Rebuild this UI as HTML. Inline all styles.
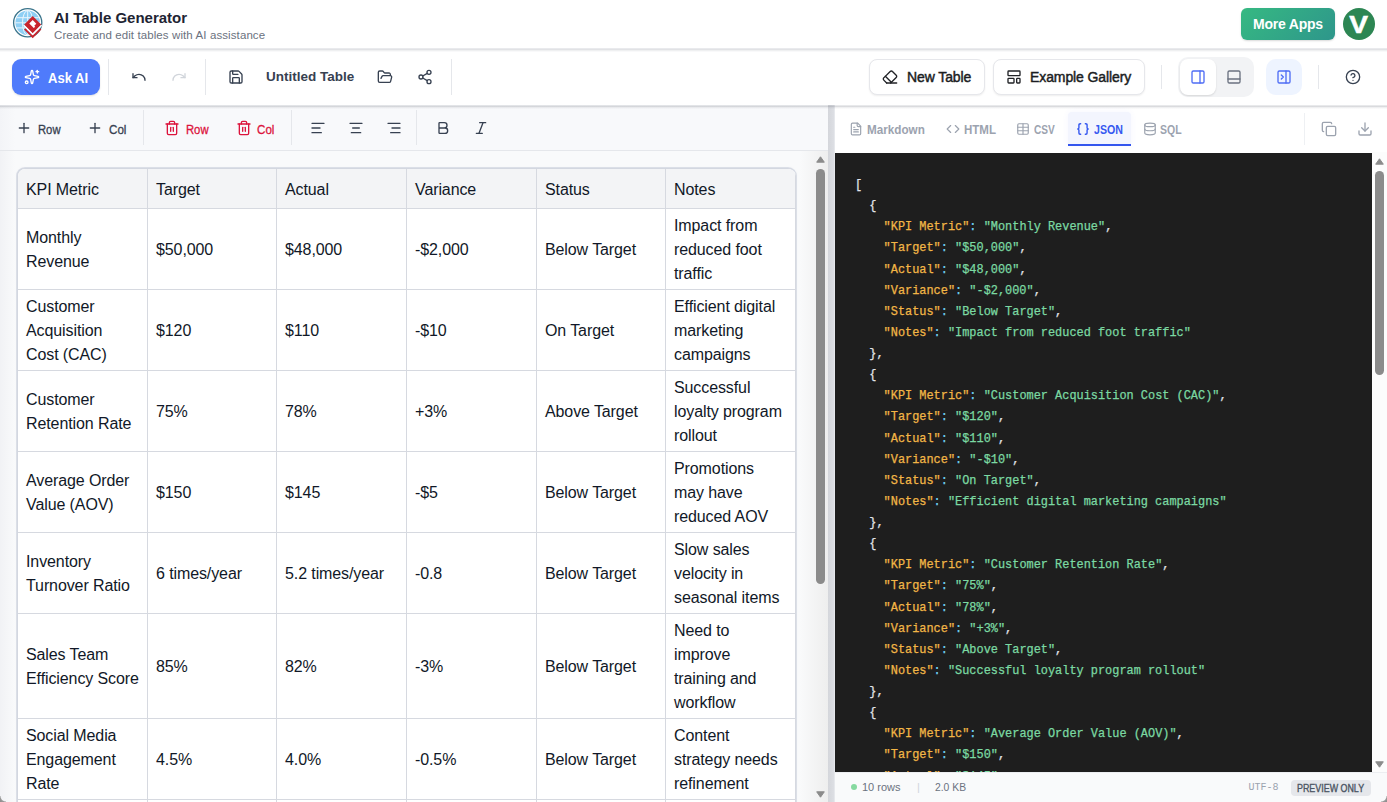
<!DOCTYPE html>
<html lang="en">
<head>
<meta charset="utf-8">
<title>AI Table Generator</title>
<style>
*{box-sizing:border-box;margin:0;padding:0}
html,body{width:1387px;height:802px;overflow:hidden;background:#fff}
body{font-family:"Liberation Sans",sans-serif;color:#1f2937;position:relative}
.abs{position:absolute}
svg.ic{position:absolute;fill:none;stroke:currentColor;stroke-width:2;stroke-linecap:round;stroke-linejoin:round}
/* header */
#hdr{left:0;top:0;width:1387px;height:48px;background:#fff;z-index:5}
#ttl{left:54px;top:9px;font-size:15px;font-weight:bold;color:#1e2433;line-height:18px;white-space:nowrap}
#sub{left:54px;top:28px;font-size:11.5px;letter-spacing:.1px;color:#6b7280;line-height:14px;white-space:nowrap}
#more{left:1241px;top:8px;width:94px;height:32px;border-radius:6px;background:linear-gradient(135deg,#36b982,#2e968b);color:#fff;font-weight:bold;font-size:14px;letter-spacing:-.22px;line-height:32px;text-align:center;box-shadow:0 1px 2px rgba(0,0,0,.15)}
#ava{left:1343px;top:8px;width:32px;height:32px;border-radius:50%;background:#2d8653;color:#fff;font-weight:bold;font-size:23px;line-height:32px;text-align:center}
/* toolbar */
#tb{left:0;top:48px;width:1387px;height:57px;background:#fff;z-index:4}
.vd{position:absolute;width:1px;background:#e5e7eb}
#ask{left:12px;top:11px;width:88px;height:36px;border-radius:9px;background:#4f7bfb;color:#fff;box-shadow:0 1px 2px rgba(0,0,0,.12)}
#ask span{position:absolute;left:35.500px;top:.5px;line-height:36px;font-size:14px;transform:scaleX(.93);transform-origin:0 50%;font-weight:bold;white-space:nowrap}
.tbi{color:#374151}
#utl{left:266px;top:20px;font-size:13.5px;font-weight:bold;color:#374151;line-height:18px;white-space:nowrap}
.btn{position:absolute;height:36px;top:11px;border:1px solid #e6e7eb;border-radius:8px;background:#fff;box-shadow:0 1px 2px rgba(0,0,0,.07);color:#202226}
.btn span{position:absolute;top:0;line-height:34px;font-size:14px;letter-spacing:-.1px;-webkit-text-stroke:.45px;white-space:nowrap;color:#1b1d22}
#seg{left:1178px;top:9px;width:76px;height:40px;border-radius:10px;background:#f2f3f5}
#segl{left:1180px;top:11px;width:36px;height:36px;border-radius:8px;background:#fff;box-shadow:0 1px 2px rgba(0,0,0,.12);color:#4f6df5}
#prc{left:1266px;top:11px;width:36px;height:36px;border-radius:10px;background:#eef4ff;color:#4f6df5}

/* left pane */
#lp{left:0;top:105px;width:828px;height:697px;background:linear-gradient(90deg,#f1f2f5 0,#f9fafb 15px)}
#st{left:0;top:0;width:828px;height:46px;background:linear-gradient(90deg,#f3f4f7 0,#f8f9fb 15px);border-bottom:1px solid #e5e7eb}
#st .t{position:absolute;top:17px;font-size:12.5px;transform-origin:0 50%;line-height:16px;color:#374151;white-space:nowrap;-webkit-text-stroke:.3px}
#st .r{color:#dc143c}
#sb1{left:800px;top:46px;width:28px;height:651px;background:linear-gradient(90deg,#f9fafb,#eeeeee)}
#sb1 i{position:absolute;left:16px;top:18px;width:9px;height:415px;border-radius:4.5px;background:#8b8b8b}
.arr{position:absolute;width:0;height:0;border-left:5px solid transparent;border-right:5px solid transparent}
#tw{left:17px;top:63px;width:779px;height:700px;border-left:1px solid #d3d7e0;border-top:1px solid #d3d7e0;border-radius:8px 8px 0 0;overflow:hidden;background:#fff;box-shadow:0 0 0 1px rgba(185,192,210,.4),0 0 2px rgba(150,160,185,.25)}
table{border-collapse:separate;border-spacing:0;table-layout:fixed;width:778px;font-size:16px;line-height:24px;color:#111827}
td,th{border-right:1px solid #d6d9e0;border-bottom:1px solid #d6d9e0;padding:5px 8px 3px;text-align:left;vertical-align:middle;font-weight:normal;letter-spacing:-0.1px;white-space:nowrap}
th{background:#f3f4f6;height:40px;padding:2px 8px 0}
/* splitter */
#sp{left:828px;top:105px;width:7px;height:697px;background:linear-gradient(90deg,#d4d6db 0,#dcdee3 80%,#eceef1 100%)}
/* right pane */
#rp{left:835px;top:105px;width:552px;height:697px;background:#fff}
.tab{position:absolute;top:17px;font-size:12.5px;font-weight:bold;line-height:16px;color:#9ca3af;white-space:nowrap;transform-origin:0 50%}
#jt{left:233px;top:7px;width:63px;height:34px;background:#f3f5fe;border-bottom:2px solid #3355ee;border-radius:4px 4px 0 0;box-shadow:0 0 6px rgba(80,110,255,.06)}
#code{left:0;top:48px;width:537px;height:619px;background:#1e1e1e;overflow:hidden}
#code pre{position:absolute;left:20px;top:22px;-webkit-text-stroke:.25px;font-family:"Liberation Mono",monospace;font-size:11.92px;line-height:21.125px;color:#e2e4e8;white-space:pre}
#code .k{color:#f2b646}
#code .c{color:#6fd0f2}
#code .s{color:#7bd9a2}
#sb2{left:537px;top:47px;width:15px;height:620px;background:#fcfcfc}
#sb2 i{position:absolute;left:3px;top:19px;width:9px;height:204px;border-radius:4.5px;background:#8b8b8b}
#stat{left:0;top:667px;width:552px;height:30px;background:#f9fafb;box-shadow:inset 0 1px 0 #eceef1;font-size:11px;color:#6b7280}
#stat div{position:absolute;white-space:nowrap;line-height:14px}
.shd{position:absolute;left:0;width:1387px;height:4px;z-index:6;pointer-events:none}
</style>
</head>
<body>
<!-- HEADER -->
<div id="hdr" class="abs">
  <svg class="abs" style="left:8px;top:4px" width="40" height="40" viewBox="0 0 40 40">
    <circle cx="19.700" cy="18.800" r="14.100" fill="#fff" stroke="#3a748b" stroke-width="1.300"/>
    <circle cx="19.700" cy="18.800" r="12.300" fill="#8ecff4"/>
    <g fill="none" stroke="#eaf6fd" stroke-width="1">
      <ellipse cx="19.700" cy="18.800" rx="5.200" ry="12.300"/>
      <path d="M19.700 6.500v24.600M8.500 13.700h22.400M7.400 18.800h24.600M8.500 23.900h22.400"/>
    </g>
    <path d="M24.700 12 33.400 20.700 24.700 29.400 16 20.700z" fill="#c8252d"/>
    <path d="M15.700 21.300 24.700 30.300 33.700 21.300" fill="none" stroke="#fff" stroke-width="1.500" stroke-miterlimit="10"/>
    <path d="M16.700 24.900 24.700 32.900 32.700 24.900" fill="none" stroke="#c8252d" stroke-width="1.900" stroke-miterlimit="10"/>
    <path d="M21.25 19.58 24.74 16.09 28.30 19.65 26.26 21.70 27.21 22.67 25.77 24.10z" fill="#fff"/>
  </svg>
  <div id="ttl" class="abs">AI Table Generator</div>
  <div id="sub" class="abs">Create and edit tables with AI assistance</div>
  <div id="more" class="abs">More Apps</div>
  <div id="ava" class="abs"><span style="display:inline-block;transform:scaleX(1.22);position:relative;top:.5px;-webkit-text-stroke:.5px #fff">V</span></div>
</div>
<div class="shd" style="top:48px;background:linear-gradient(180deg,#e9eaed 0 25%,#e1e2e5 25% 50%,#eff0f1 50% 75%,#f9f9fa 75% 100%)"></div>
<div class="shd" style="top:105px;background:linear-gradient(180deg,rgba(120,124,135,.17) 0 25%,rgba(100,104,115,.24) 25% 50%,rgba(110,114,125,.11) 50% 75%,rgba(110,114,125,.04) 75% 100%)"></div>
<!-- TOOLBAR -->
<div id="tb" class="abs">
  <div id="ask" class="abs">
    <svg class="ic" style="left:12px;top:10px" width="16" height="16" viewBox="0 0 24 24"><path d="M11.017 2.814a1 1 0 0 1 1.966 0l1.051 5.558a2 2 0 0 0 1.594 1.594l5.558 1.051a1 1 0 0 1 0 1.966l-5.558 1.051a2 2 0 0 0-1.594 1.594l-1.051 5.558a1 1 0 0 1-1.966 0l-1.051-5.558a2 2 0 0 0-1.594-1.594l-5.558-1.051a1 1 0 0 1 0-1.966l5.558-1.051a2 2 0 0 0 1.594-1.594z"/><path d="M20 2v4"/><path d="M22 4h-4"/><circle cx="4" cy="20" r="2"/></svg>
    <span>Ask AI</span>
  </div>
  <div class="vd" style="left:108px;top:11px;height:36px"></div>
  <svg class="ic tbi" style="left:131px;top:21px" width="16" height="16" viewBox="0 0 24 24"><path d="M3 7v6h6"/><path d="M21 17a9 9 0 0 0-9-9 9 9 0 0 0-6 2.3L3 13"/></svg>
  <svg class="ic" style="left:171px;top:21px;color:#d1d5db" width="16" height="16" viewBox="0 0 24 24"><path d="M21 7v6h-6"/><path d="M3 17a9 9 0 0 1 9-9 9 9 0 0 1 6 2.3l3 2.700"/></svg>
  <div class="vd" style="left:205px;top:11px;height:36px"></div>
  <svg class="ic tbi" style="left:228px;top:21px" width="16" height="16" viewBox="0 0 24 24"><path d="M15.2 3a2 2 0 0 1 1.4.6l3.8 3.8a2 2 0 0 1 .6 1.4V19a2 2 0 0 1-2 2H5a2 2 0 0 1-2-2V5a2 2 0 0 1 2-2z"/><path d="M17 21v-7a1 1 0 0 0-1-1H8a1 1 0 0 0-1 1v7"/><path d="M7 3v4a1 1 0 0 0 1 1h7"/></svg>
  <div id="utl" class="abs">Untitled Table</div>
  <svg class="ic tbi" style="left:377px;top:21px" width="16" height="16" viewBox="0 0 24 24"><path d="m6 14 1.5-2.9A2 2 0 0 1 9.24 10H20a2 2 0 0 1 1.94 2.5l-1.54 6a2 2 0 0 1-1.95 1.5H4a2 2 0 0 1-2-2V5a2 2 0 0 1 2-2h3.9a2 2 0 0 1 1.69.9l.81 1.2a2 2 0 0 0 1.67.9H18a2 2 0 0 1 2 2v2"/></svg>
  <svg class="ic tbi" style="left:417px;top:21px" width="16" height="16" viewBox="0 0 24 24"><circle cx="18" cy="5" r="3"/><circle cx="6" cy="12" r="3"/><circle cx="18" cy="19" r="3"/><line x1="8.59" x2="15.42" y1="13.51" y2="17.49"/><line x1="15.41" x2="8.59" y1="6.51" y2="10.49"/></svg>
  <div class="vd" style="left:451px;top:11px;height:36px"></div>

  <div class="btn" style="left:869px;width:116px">
    <svg class="ic" style="left:12px;top:9px" width="16" height="16" viewBox="0 0 24 24"><path d="m7 21-4.3-4.3c-1-1-1-2.500 0-3.400l9.600-9.600c1-1 2.500-1 3.400 0l5.600 5.600c1 1 1 2.500 0 3.400L13 21"/><path d="M22 21H7"/><path d="m5 11 9 9"/></svg>
    <span style="left:37px">New Table</span>
  </div>
  <div class="btn" style="left:993px;width:152px">
    <svg class="ic" style="left:12px;top:9px" width="16" height="16" viewBox="0 0 24 24"><rect width="18" height="7" x="3" y="3" rx="1"/><rect width="9" height="7" x="3" y="14" rx="1"/><rect width="5" height="7" x="16" y="14" rx="1"/></svg>
    <span style="left:36px">Example Gallery</span>
  </div>
  <div class="vd" style="left:1161px;top:17px;height:24px"></div>
  <div id="seg" class="abs"></div>
  <div id="segl" class="abs"><svg class="ic" style="left:10px;top:10px" width="16" height="16" viewBox="0 0 24 24"><rect width="18" height="18" x="3" y="3" rx="2"/><path d="M15 3v18"/></svg></div>
  <svg class="ic" style="left:1226px;top:21px;color:#6b7280" width="16" height="16" viewBox="0 0 24 24"><rect width="18" height="18" x="3" y="3" rx="2"/><path d="M3 15h18"/></svg>
  <div id="prc" class="abs"><svg class="ic" style="left:10px;top:10px" width="16" height="16" viewBox="0 0 24 24"><rect width="18" height="18" x="3" y="3" rx="2"/><path d="M15 3v18"/><path d="m8 9 3 3-3 3"/></svg></div>
  <div class="vd" style="left:1318px;top:17px;height:24px"></div>
  <svg class="ic" style="left:1345px;top:21px;color:#374151" width="16" height="16" viewBox="0 0 24 24"><circle cx="12" cy="12" r="10"/><path d="M9.09 9a3 3 0 0 1 5.83 1c0 2-3 3-3 3"/><path d="M12 17h.01"/></svg>
</div>
<div id="lp" class="abs">
  <div id="st" class="abs">
    <svg class="ic" style="left:16px;top:15px;color:#374151" width="16" height="16" viewBox="0 0 24 24"><path d="M5 12h14"/><path d="M12 5v14"/></svg><div class="t" style="left:38px;transform:scaleX(.9)">Row</div>
    <svg class="ic" style="left:87px;top:15px;color:#374151" width="16" height="16" viewBox="0 0 24 24"><path d="M5 12h14"/><path d="M12 5v14"/></svg><div class="t" style="left:109px;transform:scaleX(.93)">Col</div>
    <div class="vd" style="left:143px;top:5px;height:35px"></div>
    <svg class="ic" style="left:164px;top:15px;color:#dc143c" width="16" height="16" viewBox="0 0 24 24"><path d="M3 6h18"/><path d="M19 6v14c0 1-1 2-2 2H7c-1 0-2-1-2-2V6"/><path d="M8 6V4c0-1 1-2 2-2h4c1 0 2 1 2 2v2"/><line x1="10" x2="10" y1="11" y2="17"/><line x1="14" x2="14" y1="11" y2="17"/></svg><div class="t r" style="left:186px;transform:scaleX(.9)">Row</div>
    <svg class="ic" style="left:236px;top:15px;color:#dc143c" width="16" height="16" viewBox="0 0 24 24"><path d="M3 6h18"/><path d="M19 6v14c0 1-1 2-2 2H7c-1 0-2-1-2-2V6"/><path d="M8 6V4c0-1 1-2 2-2h4c1 0 2 1 2 2v2"/><line x1="10" x2="10" y1="11" y2="17"/><line x1="14" x2="14" y1="11" y2="17"/></svg><div class="t r" style="left:257px;transform:scaleX(.93)">Col</div>
    <div class="vd" style="left:291px;top:5px;height:35px"></div>
    <svg class="ic" style="left:309.500px;top:15px;color:#374151" width="16" height="16" viewBox="0 0 24 24"><line x1="21" x2="3" y1="5" y2="5"/><line x1="15" x2="3" y1="12" y2="12"/><line x1="17" x2="3" y1="19" y2="19"/></svg><svg class="ic" style="left:348px;top:15px;color:#374151" width="16" height="16" viewBox="0 0 24 24"><line x1="21" x2="3" y1="5" y2="5"/><line x1="17" x2="7" y1="12" y2="12"/><line x1="19" x2="5" y1="19" y2="19"/></svg><svg class="ic" style="left:386px;top:15px;color:#374151" width="16" height="16" viewBox="0 0 24 24"><line x1="21" x2="3" y1="5" y2="5"/><line x1="21" x2="9" y1="12" y2="12"/><line x1="21" x2="7" y1="19" y2="19"/></svg>
    <div class="vd" style="left:416px;top:5px;height:35px"></div>
    <svg class="ic" style="left:435px;top:15px;color:#374151" width="16" height="16" viewBox="0 0 24 24"><path d="M6 12h9a4 4 0 0 1 0 8H7a1 1 0 0 1-1-1V5a1 1 0 0 1 1-1h7a4 4 0 0 1 0 8"/></svg><svg class="ic" style="left:473px;top:15px;color:#374151" width="16" height="16" viewBox="0 0 24 24"><line x1="19" x2="10" y1="4" y2="4"/><line x1="14" x2="5" y1="20" y2="20"/><line x1="15" x2="9" y1="4" y2="20"/></svg>
  </div>
  <div id="tw" class="abs">
<table><colgroup><col style="width:130px"><col style="width:129px"><col style="width:130px"><col style="width:130px"><col style="width:129px"><col style="width:130px"></colgroup>
<tr><th>KPI Metric</th><th>Target</th><th>Actual</th><th>Variance</th><th>Status</th><th>Notes</th></tr>
<tr><td>Monthly<br>Revenue</td><td>$50,000</td><td>$48,000</td><td>-$2,000</td><td>Below Target</td><td>Impact from<br>reduced foot<br>traffic</td></tr>
<tr><td>Customer<br>Acquisition<br>Cost (CAC)</td><td>$120</td><td>$110</td><td>-$10</td><td>On Target</td><td>Efficient digital<br>marketing<br>campaigns</td></tr>
<tr><td>Customer<br>Retention Rate</td><td>75%</td><td>78%</td><td>+3%</td><td>Above Target</td><td>Successful<br>loyalty program<br>rollout</td></tr>
<tr><td>Average Order<br>Value (AOV)</td><td>$150</td><td>$145</td><td>-$5</td><td>Below Target</td><td>Promotions<br>may have<br>reduced AOV</td></tr>
<tr><td>Inventory<br>Turnover Ratio</td><td>6 times/year</td><td>5.2 times/year</td><td>-0.8</td><td>Below Target</td><td>Slow sales<br>velocity in<br>seasonal items</td></tr>
<tr><td>Sales Team<br>Efficiency Score</td><td>85%</td><td>82%</td><td>-3%</td><td>Below Target</td><td>Need to<br>improve<br>training and<br>workflow</td></tr>
<tr><td>Social Media<br>Engagement<br>Rate</td><td>4.5%</td><td>4.0%</td><td>-0.5%</td><td>Below Target</td><td>Content<br>strategy needs<br>refinement</td></tr>
<tr><td>Employee<br>Satisfaction</td><td>80%</td><td>77%</td><td>-3%</td><td>Below Target</td><td>Review<br>scheduling<br>policies</td></tr>
</table>
  </div>
  <div id="sb1" class="abs"><svg class="abs" style="left:16px;top:5px" width="9" height="7" viewBox="0 0 9 7"><path d="M4.500.8 8.300 6.200H.700z" fill="#8b8b8b" stroke="#8b8b8b" stroke-width="1" stroke-linejoin="round"/></svg><i></i><svg class="abs" style="left:16px;bottom:4px" width="9" height="7" viewBox="0 0 9 7"><path d="M4.500 6.200 8.300.8H.700z" fill="#8b8b8b" stroke="#8b8b8b" stroke-width="1" stroke-linejoin="round"/></svg></div>
</div>

<div id="sp" class="abs"></div>
<div id="rp" class="abs">
  <svg class="ic" style="left:14px;top:17px;color:#9ca3af" width="14" height="14" viewBox="0 0 24 24"><path d="M15 2H6a2 2 0 0 0-2 2v16a2 2 0 0 0 2 2h12a2 2 0 0 0 2-2V7Z"/><path d="M14 2v4a2 2 0 0 0 2 2h4"/><path d="M10 9H8"/><path d="M16 13H8"/><path d="M16 17H8"/></svg><div class="tab" style="left:32px;transform:scaleX(0.935)">Markdown</div>
  <svg class="ic" style="left:111px;top:17px;color:#9ca3af" width="14" height="14" viewBox="0 0 24 24"><polyline points="16 18 22 12 16 6"/><polyline points="8 6 2 12 8 18"/></svg><div class="tab" style="left:128.5px;transform:scaleX(0.922)">HTML</div>
  <svg class="ic" style="left:181px;top:17px;color:#9ca3af" width="14" height="14" viewBox="0 0 24 24"><path d="M12 3v18"/><rect width="18" height="18" x="3" y="3" rx="2"/><path d="M3 9h18"/><path d="M3 15h18"/></svg><div class="tab" style="left:198.8px;transform:scaleX(0.81)">CSV</div>
  <div id="jt" class="abs"></div>
  <svg class="ic" style="left:241px;top:17px;color:#3558f0;stroke-width:2.4" width="14" height="14" viewBox="0 0 24 24"><path d="M8 3H7a2 2 0 0 0-2 2v5a2 2 0 0 1-2 2 2 2 0 0 1 2 2v5c0 1.1.9 2 2 2h1"/><path d="M16 21h1a2 2 0 0 0 2-2v-5c0-1.1.9-2 2-2a2 2 0 0 1-2-2V5a2 2 0 0 0-2-2h-1"/></svg><div class="tab" style="left:258.6px;transform:scaleX(0.849);color:#3558f0">JSON</div>
  <svg class="ic" style="left:308px;top:17px;color:#9ca3af" width="14" height="14" viewBox="0 0 24 24"><ellipse cx="12" cy="5" rx="9" ry="3"/><path d="M3 5V19A9 3 0 0 0 21 19V5"/><path d="M3 12A9 3 0 0 0 21 12"/></svg><div class="tab" style="left:325.3px;transform:scaleX(0.84)">SQL</div>
  <div class="vd" style="left:469px;top:8px;height:32px;background:#eef0f3"></div>
  <svg class="ic" style="left:486px;top:16px;color:#9ca3af" width="16" height="16" viewBox="0 0 24 24"><rect width="14" height="14" x="8" y="8" rx="2" ry="2"/><path d="M4 16c-1.1 0-2-.9-2-2V4c0-1.1.9-2 2-2h10c1.1 0 2 .9 2 2"/></svg><svg class="ic" style="left:522px;top:16px;color:#9ca3af" width="16" height="16" viewBox="0 0 24 24"><path d="M21 15v4a2 2 0 0 1-2 2H5a2 2 0 0 1-2-2v-4"/><polyline points="7 10 12 15 17 10"/><line x1="12" x2="12" y1="15" y2="3"/></svg>
  <div id="code" class="abs"><pre>[
  {
    <span class="k">"KPI Metric"</span><span class="c">:</span> <span class="s">"Monthly Revenue"</span>,
    <span class="k">"Target"</span><span class="c">:</span> <span class="s">"$50,000"</span>,
    <span class="k">"Actual"</span><span class="c">:</span> <span class="s">"$48,000"</span>,
    <span class="k">"Variance"</span><span class="c">:</span> <span class="s">"-$2,000"</span>,
    <span class="k">"Status"</span><span class="c">:</span> <span class="s">"Below Target"</span>,
    <span class="k">"Notes"</span><span class="c">:</span> <span class="s">"Impact from reduced foot traffic"</span>
  },
  {
    <span class="k">"KPI Metric"</span><span class="c">:</span> <span class="s">"Customer Acquisition Cost (CAC)"</span>,
    <span class="k">"Target"</span><span class="c">:</span> <span class="s">"$120"</span>,
    <span class="k">"Actual"</span><span class="c">:</span> <span class="s">"$110"</span>,
    <span class="k">"Variance"</span><span class="c">:</span> <span class="s">"-$10"</span>,
    <span class="k">"Status"</span><span class="c">:</span> <span class="s">"On Target"</span>,
    <span class="k">"Notes"</span><span class="c">:</span> <span class="s">"Efficient digital marketing campaigns"</span>
  },
  {
    <span class="k">"KPI Metric"</span><span class="c">:</span> <span class="s">"Customer Retention Rate"</span>,
    <span class="k">"Target"</span><span class="c">:</span> <span class="s">"75%"</span>,
    <span class="k">"Actual"</span><span class="c">:</span> <span class="s">"78%"</span>,
    <span class="k">"Variance"</span><span class="c">:</span> <span class="s">"+3%"</span>,
    <span class="k">"Status"</span><span class="c">:</span> <span class="s">"Above Target"</span>,
    <span class="k">"Notes"</span><span class="c">:</span> <span class="s">"Successful loyalty program rollout"</span>
  },
  {
    <span class="k">"KPI Metric"</span><span class="c">:</span> <span class="s">"Average Order Value (AOV)"</span>,
    <span class="k">"Target"</span><span class="c">:</span> <span class="s">"$150"</span>,
    <span class="k">"Actual"</span><span class="c">:</span> <span class="s">"$145"</span>,
    <span class="k">"Variance"</span><span class="c">:</span> <span class="s">"-$5"</span>,
    <span class="k">"Status"</span><span class="c">:</span> <span class="s">"Below Target"</span>,
    <span class="k">"Notes"</span><span class="c">:</span> <span class="s">"Promotions may have reduced AOV"</span>
  },</pre></div>
  <div id="sb2" class="abs"><svg class="abs" style="left:3px;top:6px" width="9" height="7" viewBox="0 0 9 7"><path d="M4.500.8 8.300 6.200H.700z" fill="#8b8b8b" stroke="#8b8b8b" stroke-width="1" stroke-linejoin="round"/></svg><i></i><svg class="abs" style="left:3px;bottom:4px" width="9" height="7" viewBox="0 0 9 7"><path d="M4.500 6.200 8.300.8H.700z" fill="#8b8b8b" stroke="#8b8b8b" stroke-width="1" stroke-linejoin="round"/></svg></div>
  <div id="stat" class="abs">
    <div style="left:16px;top:12px;width:6px;height:6px;border-radius:50%;background:#86d9a0"></div>
    <div style="left:27px;top:8px">10 rows</div>
    <div style="left:82px;top:8px;color:#d1d5db">|</div>
    <div style="left:100px;top:8px;transform:scaleX(.94);transform-origin:0 50%">2.0 KB</div>
    <div style="left:413.500px;top:9px;font-family:'Liberation Mono',monospace;font-size:10px;color:#9ca3af">UTF-8</div>
    <div style="left:456px;top:7.5px;width:80px;height:16px;border-radius:4px;background:#e5e7eb"></div>
    <div style="left:462px;top:9.5px;font-size:10px;-webkit-text-stroke:.35px;color:#4b5563;transform:scaleX(.89);transform-origin:0 50%">PREVIEW ONLY</div>
  </div>
</div>

<div class="abs" style="left:0;top:796px;width:6px;height:6px;z-index:9;background:radial-gradient(circle at 100% 0,rgba(0,0,0,0) 5px,#9a9a9a 6px,#8c8c8c 8px)"></div>
<div class="abs" style="left:1381px;top:796px;width:6px;height:6px;z-index:9;background:radial-gradient(circle at 0 0,rgba(0,0,0,0) 5px,#9a9a9a 6px,#8c8c8c 8px)"></div>
</body>
</html>
